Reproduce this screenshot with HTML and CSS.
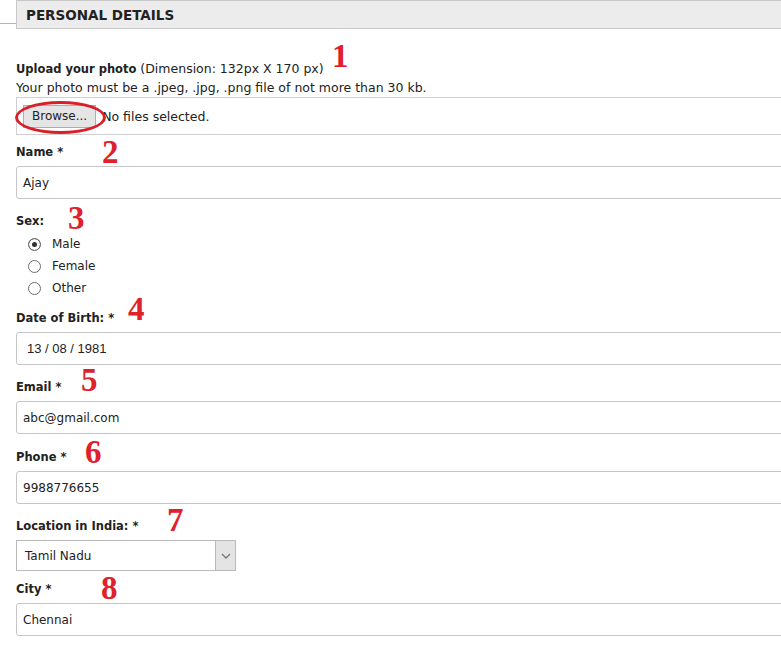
FILE: index.html
```html
<!DOCTYPE html>
<html lang="en">
<head>
    <meta charset="UTF-8">
    <meta name="viewport" content="width=device-width, initial-scale=1.0">
    <title>Personal Details</title>
    <link rel="stylesheet" href="styles.css">
</head>
<body>
    <div class="page">
        <div class="gutter"></div>

        <div class="main">
            <div class="section-title">PERSONAL DETAILS</div>

            <!-- Photo upload -->
            <div class="upload">
                <p class="line"><b>Upload your photo</b> (Dimension: 132px X 170 px)</p>
                <p class="line">Your photo must be a .jpeg, .jpg, .png file of not more than 30 kb.</p>
                <span class="num n1">1</span>
            </div>
            <div class="file-box">
                <button class="browse">Browse...</button>
                <span class="file-status">No files selected.</span>
                <span class="ring"></span>
            </div>

            <div class="field">
                <label class="label">Name *</label>
                <input class="text-input" type="text" value="Ajay">
                <span class="num n2">2</span>
            </div>

            <div class="field radios">
                <label class="label">Sex:</label>
                <label class="radio-row"><input type="radio" name="sex" checked> Male</label>
                <label class="radio-row"><input type="radio" name="sex"> Female</label>
                <label class="radio-row"><input type="radio" name="sex"> Other</label>
                <span class="num n3">3</span>
            </div>

            <div class="field">
                <label class="label">Date of Birth: *</label>
                <div class="text-input date-input">13 / 08 / 1981</div>
                <span class="num n4">4</span>
            </div>

            <div class="field">
                <label class="label">Email *</label>
                <input class="text-input" type="text" value="abc@gmail.com">
                <span class="num n5">5</span>
            </div>

            <div class="field phone">
                <label class="label">Phone *</label>
                <input class="text-input" type="text" value="9988776655">
                <span class="num n6">6</span>
            </div>

            <div class="field location">
                <label class="label">Location in India: *</label>
                <div class="select">
                    <span class="select-value">Tamil Nadu</span>
                    <span class="select-arrow">
                        <svg width="10" height="6" viewBox="0 0 10 6"><path d="M1 1 L5 5 L9 1" fill="none" stroke="#777" stroke-width="1.3"/></svg>
                    </span>
                </div>
                <span class="num n7">7</span>
            </div>

            <div class="field">
                <label class="label">City *</label>
                <input class="text-input" type="text" value="Chennai">
                <span class="num n8">8</span>
            </div>
        </div>
    </div>
</body>
</html>
```

FILE: styles.css
```css
body {
    margin: 0;
    background: #fff;
    color: #222;
    font-family: "DejaVu Sans", Verdana, sans-serif;
    font-size: 12.5px;
    overflow: hidden;
}

.page {
    display: flex;
    width: 820px;
}

.gutter {
    width: 16px;
    height: 23px;
    border-bottom: 1px solid #b5b5b5;
    flex-shrink: 0;
}

.main {
    flex: 1;
}

.section-title {
    height: 27px;
    line-height: 28px;
    padding-left: 9px;
    background: #ececec;
    border: 1px solid #c8c8c8;
    border-right: none;
    font-size: 13.5px;
    font-weight: bold;
    color: #222;
}

.upload {
    position: relative;
    margin-top: 30px;
}

.line {
    margin: 0;
    height: 19px;
    line-height: 19px;
}

.line b {
    font-size: 11.5px;
}

.file-box {
    position: relative;
    display: flex;
    align-items: center;
    height: 36px;
    border: 1px solid #cfcfcf;
    border-right: none;
    padding-left: 6px;
}

.browse {
    height: 23px;
    padding: 0 8px;
    background: #e5e5e5;
    border: 1px solid #adadad;
    font-family: "DejaVu Sans", Verdana, sans-serif;
    font-size: 12px;
    color: #222;
}

.file-status {
    margin-left: 6px;
}

/* red marker drawn round the browse button */
.ring {
    position: absolute;
    left: -2px;
    top: 3px;
    width: 85px;
    height: 27px;
    border: 3px solid #d8202b;
    border-radius: 50%;
}

.field {
    position: relative;
    margin-top: 8px;
    margin-bottom: 13px;
}

.field + .field {
    margin-top: 0;
}

.label {
    display: block;
    height: 18px;
    line-height: 18px;
    margin-bottom: 5px;
    font-size: 11.5px;
    font-weight: bold;
}

.text-input {
    display: block;
    box-sizing: border-box;
    width: 100%;
    height: 33px;
    padding: 0 6px;
    border: 1px solid #c6c6c6;
    border-radius: 3px;
    font-family: "DejaVu Sans", Verdana, sans-serif;
    font-size: 12px;
    color: #222;
    outline: none;
}

.date-input {
    display: flex;
    align-items: center;
    padding-left: 10px;
    font-family: "Liberation Sans", Arial, sans-serif;
    font-size: 13px;
}

.radios {
    margin-bottom: 10px;
}

.radios .label {
    margin-bottom: 3px;
}

.radio-row {
    display: flex;
    align-items: center;
    height: 22px;
    padding-left: 12px;
    font-size: 12px;
}

.radio-row input {
    appearance: none;
    width: 13px;
    height: 13px;
    margin: 0 11px 0 0;
    border: 1px solid #6e6e6e;
    border-radius: 50%;
    background: #fff;
}

.radio-row input:checked {
    background: #333;
    box-shadow: inset 0 0 0 3px #fff;
}

.phone {
    padding-top: 1px;
}

.location {
    margin-bottom: 9px;
}

.select {
    display: flex;
    width: 220px;
    height: 31px;
    box-sizing: border-box;
    border: 1px solid #b9b9b9;
    font-size: 12px;
}

.select-value {
    flex: 1;
    display: flex;
    align-items: center;
    padding-left: 8px;
}

.select-arrow {
    width: 19px;
    display: flex;
    align-items: center;
    justify-content: center;
    background: #e4e4e4;
    border-left: 1px solid #b9b9b9;
}

/* red step numbers pasted over the screenshot */
.num {
    position: absolute;
    font-family: "Liberation Serif", "Times New Roman", serif;
    font-weight: bold;
    font-size: 33px;
    line-height: 32px;
    color: #e0202b;
}

.n1 { left: 316px; top: -19px; }
.n2 { left: 86px; top: -7px; }
.n3 { left: 52px; top: -10px; }
.n4 { left: 112px; top: -16px; }
.n5 { left: 65px; top: -14px; }
.n6 { left: 69px; top: -11px; }
.n7 { left: 151px; top: -13px; }
.n8 { left: 85px; top: -8px; }
```
